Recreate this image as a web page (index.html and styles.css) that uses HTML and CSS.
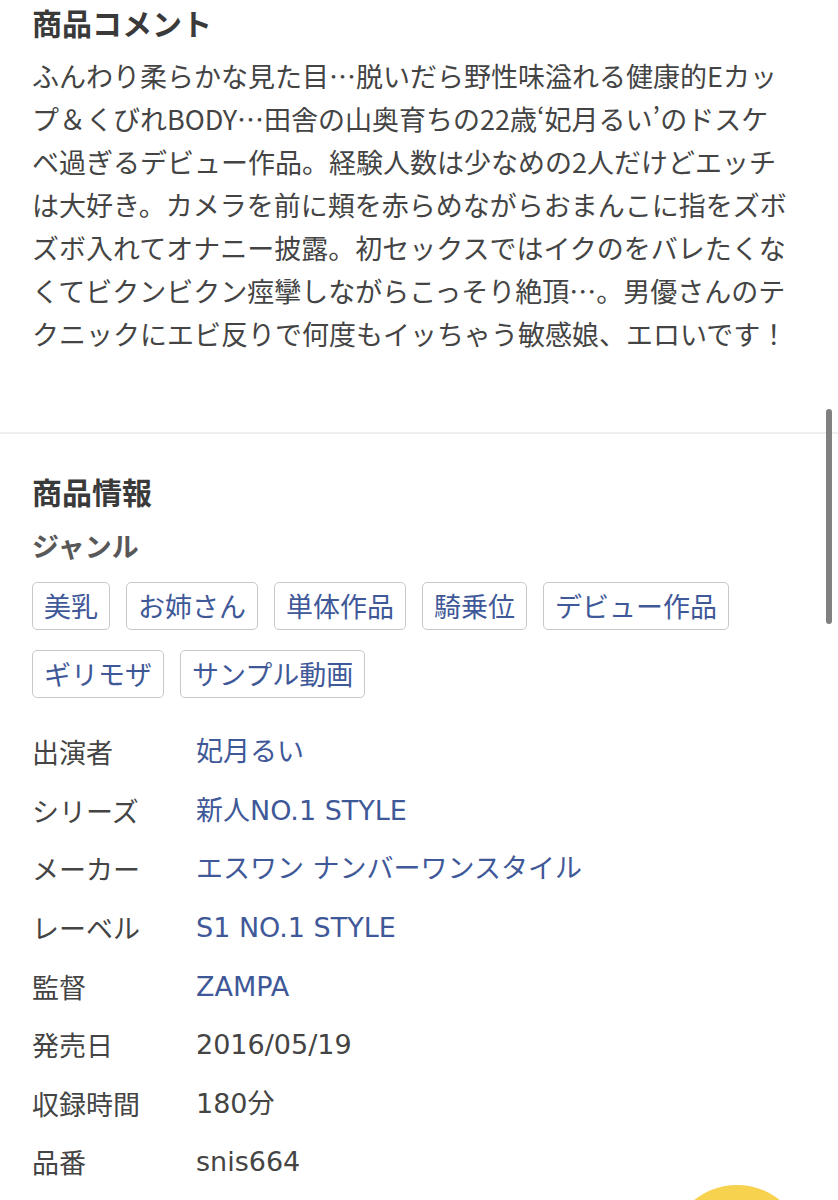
FILE: index.html
```html
<!DOCTYPE html>
<html lang="ja">
<head>
<meta charset="utf-8">
<title>商品情報</title>
<link rel="stylesheet" href="styles.css">
</head>
<body>
<main class="page">
  <section class="section section-comment">
    <h2 class="section-title">商品コメント</h2>
    <p class="comment">ふんわり柔らかな見た目…脱いだら野性味溢れる健康的Eカップ＆くびれBODY…田舎の山奥育ちの22歳‘妃月るい’のドスケベ過ぎるデビュー作品。経験人数は少なめの2人だけどエッチは大好き。カメラを前に頬を赤らめながらおまんこに指をズボズボ入れてオナニー披露。初セックスではイクのをバレたくなくてビクンビクン痙攣しながらこっそり絶頂…。男優さんのテクニックにエビ反りで何度もイッちゃう敏感娘、エロいです！</p>
  </section>
  <section class="section section-info">
    <h2 class="section-title">商品情報</h2>
    <h3 class="sub-title">ジャンル</h3>
    <ul class="tags">
      <li><a class="tag" href="#">美乳</a></li>
      <li><a class="tag" href="#">お姉さん</a></li>
      <li><a class="tag" href="#">単体作品</a></li>
      <li><a class="tag" href="#">騎乗位</a></li>
      <li><a class="tag" href="#">デビュー作品</a></li>
      <li><a class="tag" href="#">ギリモザ</a></li>
      <li><a class="tag" href="#">サンプル動画</a></li>
    </ul>
    <dl class="info">
      <dt>出演者</dt><dd><a href="#">妃月るい</a></dd>
      <dt>シリーズ</dt><dd><a href="#">新人NO.1 STYLE</a></dd>
      <dt>メーカー</dt><dd><a href="#">エスワン ナンバーワンスタイル</a></dd>
      <dt>レーベル</dt><dd><a href="#">S1 NO.1 STYLE</a></dd>
      <dt>監督</dt><dd><a href="#">ZAMPA</a></dd>
      <dt>発売日</dt><dd>2016/05/19</dd>
      <dt>収録時間</dt><dd>180分</dd>
      <dt>品番</dt><dd>snis664</dd>
    </dl>
  </section>
</main>
<div class="scroll-indicator"></div>
<div class="fab"></div>
</body>
</html>
```
FILE: styles.css
```css
html, body {
  margin: 0;
  padding: 0;
  overflow: hidden;
  background: #fff;
}
body {
  font-family: "Noto Sans CJK JP", "Liberation Sans", sans-serif;
  color: #444;
  font-size: 27px;
}
a {
  color: #3f5898;
  text-decoration: none;
}
.section {
  padding: 0 32px;
}
.section-comment {
  padding-bottom: 77px;
  border-bottom: 2px solid #eeeeee;
}
.section-info {
  padding-top: 35px;
}
.section-title {
  margin: 0;
  font-size: 30px;
  line-height: 44px;
  font-weight: bold;
  color: #3a3a3a;
}
.comment {
  margin: 10px 0 0;
  max-width: 762px;
  line-height: 43px;
  color: #444;
}
.sub-title {
  margin: 13px 0 0;
  font-size: 27px;
  line-height: 40px;
  font-weight: bold;
  color: #585858;
}
.tags {
  list-style: none;
  margin: 16px 0 0;
  padding: 0;
  display: flex;
  flex-wrap: wrap;
  gap: 20px 16px;
}
.tag {
  display: block;
  border: 1px solid #c9c9c9;
  border-radius: 5px;
  padding: 0 11px;
  line-height: 46px;
  font-size: 27px;
}
.info {
  margin: 25px 0 0;
  display: grid;
  grid-template-columns: 164px 1fr;
  grid-auto-rows: 58.6px;
  align-items: center;
}
.info dt, .info dd {
  margin: 0;
  line-height: 40px;
}
.info dt {
  color: #444;
}
.info dd {
  font-family: "DejaVu Sans", "Noto Sans CJK JP", sans-serif;
  color: #444;
}
.scroll-indicator {
  position: fixed;
  left: 826px;
  top: 409px;
  width: 6px;
  height: 215px;
  border-radius: 3px;
  background: #808080;
}
.fab {
  position: fixed;
  left: 668px;
  top: 1185px;
  width: 138px;
  height: 138px;
  border-radius: 50%;
  background: #f7d24e;
}
```
